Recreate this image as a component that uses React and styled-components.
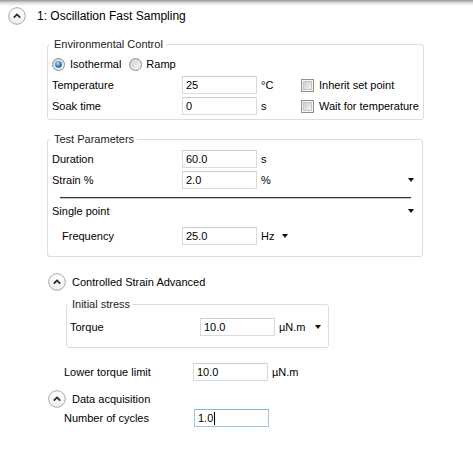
import React from "react";
import styled, { createGlobalStyle } from "styled-components";

const GlobalStyle = createGlobalStyle`
  body {
    margin: 0;
    background: #fff;
    font-family: "Liberation Sans", Arial, sans-serif;
    font-size: 11px;
    color: #000;
  }
`;

const Page = styled.div`
  width: 473px;
  height: 451px;
  overflow: hidden;
  background: #fff;
`;

const TopShade = styled.div`
  height: 6px;
  background: linear-gradient(#959595, #dcdcdc 45%, #fff);
`;

const SectionHeader = styled.div`
  display: flex;
  align-items: center;
  gap: ${(p) => p.gap || 6}px;
  height: 18px;
  margin-top: ${(p) => p.top || 0}px;
  margin-left: ${(p) => p.left || 0}px;
  font-size: ${(p) => (p.big ? 12 : 11)}px;
`;

const Body = styled.div`
  margin-left: 47px;
  width: 376px;
`;

const Group = styled.fieldset`
  margin: ${(p) => p.top || 0}px 0 0 ${(p) => p.left || 0}px;
  width: ${(p) => p.width || 376}px;
  box-sizing: border-box;
  border: 1px solid #d5dfe6;
  border-radius: 3px;
  padding: ${(p) => p.pt || 4}px 4px ${(p) => p.pb || 4}px ${(p) => p.pl || 4}px;
`;

const Legend = styled.legend`
  padding: 0 3px 0 4px;
  margin-left: -2px;
  line-height: 14px;
  color: #1c1c28;
`;

const Stack = styled.div`
  display: flex;
  flex-direction: column;
  gap: ${(p) => p.gap || 3}px;
`;

const Row = styled.div`
  display: flex;
  align-items: center;
  height: 18px;
  white-space: nowrap;
  margin-top: ${(p) => p.top || 0}px;
  margin-left: ${(p) => p.left || 0}px;
`;

const Label = styled.span`
  width: ${(p) => p.w || 130}px;
  flex: none;
  box-sizing: border-box;
  padding-left: ${(p) => p.indent || 0}px;
`;

const TextBox = styled.div`
  width: 75px;
  height: 18px;
  box-sizing: border-box;
  flex: none;
  border: 1px solid ${(p) => (p.focused ? "#9cc6ea" : "#dadada")};
  border-top-color: ${(p) => (p.focused ? "#86b6e2" : "#cdcdcd")};
  padding-left: 3px;
  line-height: 16px;
  background: #fff;
  display: flex;
  align-items: center;
`;

const Caret = styled.span`
  display: inline-block;
  width: 1px;
  height: 13px;
  background: #000;
  margin-left: 1px;
`;

const Unit = styled.span`
  width: ${(p) => p.w || "auto"};
  flex: none;
  padding-left: 4px;
  box-sizing: border-box;
`;

const Arrow = styled.span`
  width: 0;
  height: 0;
  flex: none;
  border-left: 3.5px solid transparent;
  border-right: 3.5px solid transparent;
  border-top: 4px solid #111;
  margin-left: ${(p) => p.ml || "auto"};
  margin-right: ${(p) => p.mr || 0}px;
`;

const Separator = styled.div`
  height: 1px;
  background: #333;
  box-shadow: 0 1px 0 #c8c8c8;
  margin: 8px 7px 4px 8px;
`;

const Choice = styled.label`
  display: flex;
  align-items: center;
  white-space: nowrap;
  gap: ${(p) => p.gap || 5}px;
  margin-right: ${(p) => p.mr || 0}px;
`;

const RadioRow = styled.div`
  display: flex;
  align-items: center;
  height: 14px;
  margin-bottom: 2px;
`;

function CollapseButton() {
  return (
    <svg width="18" height="18" viewBox="0 0 18 18">
      <defs>
        <linearGradient id="cb" x1="0" y1="0" x2="0" y2="1">
          <stop offset="0" stopColor="#ffffff" />
          <stop offset="1" stopColor="#eeeeee" />
        </linearGradient>
      </defs>
      <circle cx="9" cy="9" r="8.3" fill="url(#cb)" stroke="#a8a8a8" strokeWidth="1" />
      <path d="M5.8 10.6 L9 7.4 L12.2 10.6" fill="none" stroke="#2a2a2a" strokeWidth="1.8" />
    </svg>
  );
}

function Radio({ checked }) {
  return (
    <svg width="13" height="13" viewBox="0 0 13 13">
      <defs>
        <linearGradient id="rb" x1="0" y1="0" x2="1" y2="1">
          <stop offset="0" stopColor="#cfcfcf" />
          <stop offset="1" stopColor="#f7f7f7" />
        </linearGradient>
        <radialGradient id="rd" cx="0.4" cy="0.35" r="0.7">
          <stop offset="0" stopColor="#b8e2ff" />
          <stop offset="0.5" stopColor="#3d8fd6" />
          <stop offset="1" stopColor="#124a86" />
        </radialGradient>
      </defs>
      <circle cx="6.5" cy="6.5" r="6" fill="url(#rb)" stroke="#8e8f8f" strokeWidth="1" />
      {checked && <circle cx="6.5" cy="6.5" r="3.3" fill="url(#rd)" />}
    </svg>
  );
}

function Check() {
  return (
    <svg width="13" height="13" viewBox="0 0 13 13">
      <defs>
        <linearGradient id="ck" x1="0" y1="0" x2="1" y2="1">
          <stop offset="0" stopColor="#cbcbcb" />
          <stop offset="1" stopColor="#f5f5f5" />
        </linearGradient>
      </defs>
      <rect x="0.5" y="0.5" width="12" height="12" fill="#f4f4f4" stroke="#8e8f8f" />
      <rect x="2.5" y="2.5" width="8" height="8" fill="url(#ck)" stroke="#c4c4c4" />
    </svg>
  );
}

export default function App() {
  return (
    <Page>
      <GlobalStyle />
      <TopShade />
      <SectionHeader big gap={11} left={8} top={1}>
        <CollapseButton />
        <span>1: Oscillation Fast Sampling</span>
      </SectionHeader>

      <Body>
        <Group top={12} pt={6} pb={4}>
          <Legend>Environmental Control</Legend>
          <RadioRow>
            <Choice mr={8}>
              <Radio checked />
              Isothermal
            </Choice>
            <Choice gap={4}>
              <Radio />
              Ramp
            </Choice>
          </RadioRow>
          <Stack>
            <Row top={3}>
              <Label>Temperature</Label>
              <TextBox>25</TextBox>
              <Unit w="44px">°C</Unit>
              <Choice>
                <Check />
                Inherit set point
              </Choice>
            </Row>
            <Row>
              <Label>Soak time</Label>
              <TextBox>0</TextBox>
              <Unit w="44px">s</Unit>
              <Choice>
                <Check />
                Wait for temperature
              </Choice>
            </Row>
          </Stack>
        </Group>

        <Group top={12} pt={4} pb={11}>
          <Legend>Test Parameters</Legend>
          <Stack>
            <Row>
              <Label>Duration</Label>
              <TextBox>60.0</TextBox>
              <Unit>s</Unit>
            </Row>
            <Row>
              <Label>Strain %</Label>
              <TextBox>2.0</TextBox>
              <Unit>%</Unit>
              <Arrow mr={4} />
            </Row>
          </Stack>
          <Separator />
          <Row>
            <Label>Single point</Label>
            <Arrow mr={4} />
          </Row>
          <Row top={7}>
            <Label indent={10}>Frequency</Label>
            <TextBox>25.0</TextBox>
            <Unit>Hz</Unit>
            <Arrow ml="8px" />
          </Row>
        </Group>

        <SectionHeader top={16} left={1}>
          <CollapseButton />
          <span>Controlled Strain Advanced</span>
        </SectionHeader>

        <Group top={6} left={19} width={263} pt={7} pb={11} pl={3}>
          <Legend>Initial stress</Legend>
          <Row>
            <Label>Torque</Label>
            <TextBox>10.0</TextBox>
            <Unit>µN.m</Unit>
            <Arrow ml="9px" />
          </Row>
        </Group>

        <Row top={15} left={17}>
          <Label w={129}>Lower torque limit</Label>
          <TextBox>10.0</TextBox>
          <Unit>µN.m</Unit>
        </Row>

        <SectionHeader top={9} left={1}>
          <CollapseButton />
          <span>Data acquisition</span>
        </SectionHeader>

        <Row top={1} left={17}>
          <Label>Number of cycles</Label>
          <TextBox focused>
            1.0
            <Caret />
          </TextBox>
        </Row>
      </Body>
    </Page>
  );
}
